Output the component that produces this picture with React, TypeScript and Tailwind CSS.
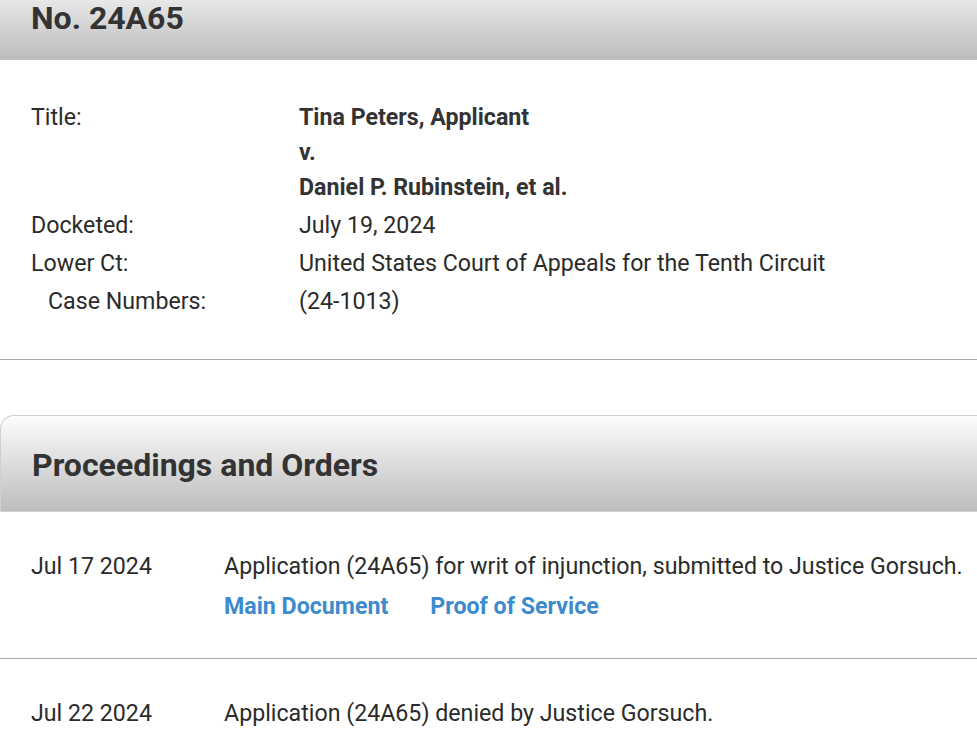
export default function App() {
  const details: { label: string; indent?: boolean; value: React.ReactNode }[] = [
    {
      label: 'Title:',
      value: (
        <div className="font-bold text-[#333]">
          <div>Tina Peters, Applicant</div>
          <div>v.</div>
          <div>Daniel P. Rubinstein, et al.</div>
        </div>
      ),
    },
    { label: 'Docketed:', value: 'July 19, 2024' },
    { label: 'Lower Ct:', value: 'United States Court of Appeals for the Tenth Circuit' },
    { label: 'Case Numbers:', indent: true, value: '(24-1013)' },
  ];

  const proceedings = [
    {
      date: 'Jul 17 2024',
      text: 'Application (24A65) for writ of injunction, submitted to Justice Gorsuch.',
      links: ['Main Document', 'Proof of Service'],
    },
    {
      date: 'Jul 22 2024',
      text: 'Application (24A65) denied by Justice Gorsuch.',
      links: [],
    },
  ];

  return (
    <div className="w-[977px] h-[736px] overflow-hidden bg-white text-[#2b2b2b] font-['Roboto',sans-serif] text-[23.2px]">
      {/* Docket header */}
      <div className="h-[60px] border-b border-[#c4c4c4] bg-gradient-to-b from-[#e8e8e8] to-[#bcbcbc] pl-[31px] pt-[1px]">
        <h1 className="text-[32px] font-bold leading-[34px] text-[#333]">No. 24A65</h1>
      </div>

      {/* Case details */}
      <div className="pt-[40px] pb-[40px] border-b border-[#aaa] leading-[35px]">
        <div className="grid grid-cols-[299px_1fr] gap-y-[3px]">
          {details.map((d) => (
            <div key={d.label} className="contents">
              <div className={d.indent ? 'pl-[48px]' : 'pl-[31px]'}>{d.label}</div>
              <div className="whitespace-nowrap">{d.value}</div>
            </div>
          ))}
        </div>
      </div>

      {/* Proceedings */}
      <div className="mt-[55px]">
        <div className="h-[97px] rounded-tl-[14px] border-t border-l border-b border-[#d0d0d0] bg-gradient-to-b from-[#fdfdfd] to-[#bdbdbd] pl-[31px] flex items-center">
          <h2 className="text-[32px] font-bold text-[#333] pt-[3px] leading-[40px]">Proceedings and Orders</h2>
        </div>
        {proceedings.map((p, i) => (
          <div
            key={p.date}
            className={`flex pt-[34px] pb-[32px] leading-[40px] ${i < proceedings.length - 1 ? 'border-b border-[#aaa]' : ''}`}
          >
            <div className="w-[224px] shrink-0 pl-[31px]">{p.date}</div>
            <div>
              <div className="whitespace-nowrap">{p.text}</div>
              {p.links.length > 0 && (
                <div className="flex gap-[42px] font-bold text-[#3d8bcd]">
                  {p.links.map((l) => (
                    <a key={l} href="#">
                      {l}
                    </a>
                  ))}
                </div>
              )}
            </div>
          </div>
        ))}
      </div>
    </div>
  );
}
